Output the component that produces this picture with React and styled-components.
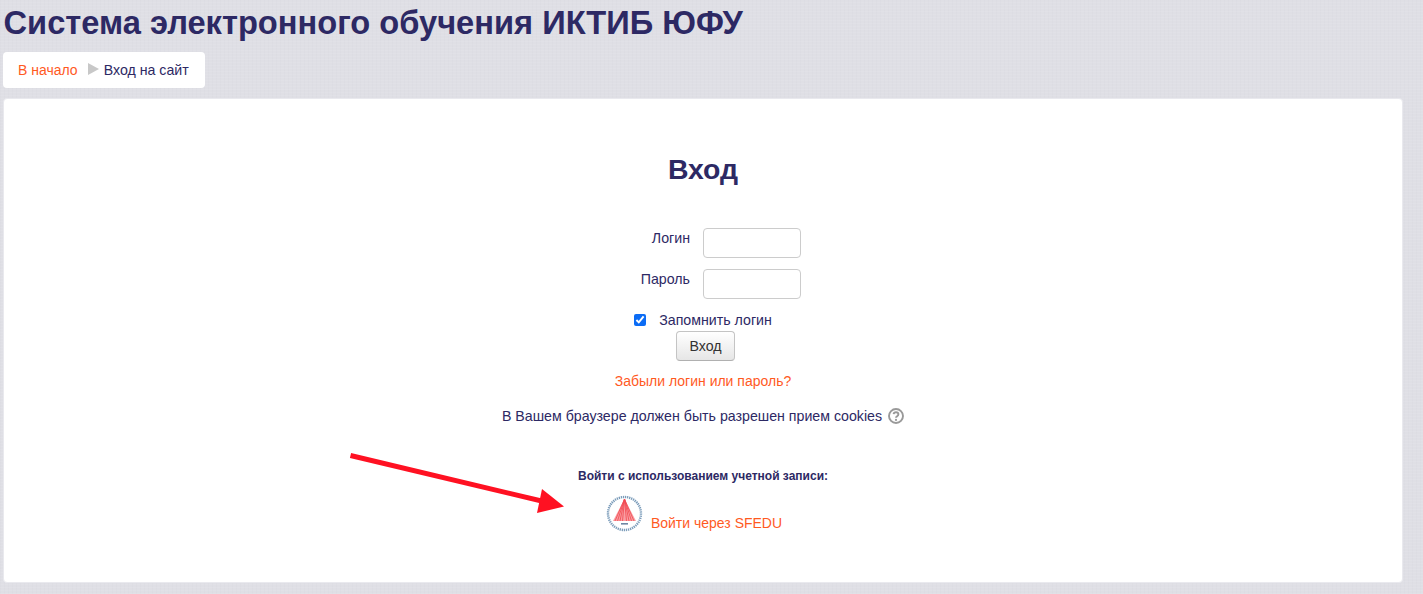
import styled, { createGlobalStyle } from "styled-components";

const GlobalStyle = createGlobalStyle`
  html, body {
    margin: 0;
    padding: 0;
    height: 100%;
  }
  body {
    overflow: hidden;
    background-color: #dfdfe5;
    background-image:
      repeating-linear-gradient(0deg, rgba(255, 255, 255, 0.07) 0 1px, transparent 1px 3px),
      repeating-linear-gradient(90deg, rgba(120, 120, 140, 0.025) 0 1px, transparent 1px 4px);
    font-family: "Liberation Sans", Arial, sans-serif;
    font-size: 14.2px;
    color: #2d2964;
  }
`;

const Page = styled.div`
  position: relative;
  width: 1423px;
  height: 594px;
  padding: 0 20px 0 3px;
  box-sizing: border-box;
`;

const SiteTitle = styled.h1`
  margin: 0;
  padding: 5px 0 0 0.5px;
  height: 52px;
  box-sizing: border-box;
  font-size: 32.65px;
  line-height: 36px;
  font-weight: bold;
  color: #2d2964;
  white-space: nowrap;
`;

const Breadcrumb = styled.nav`
  display: inline-flex;
  align-items: center;
  height: 36px;
  padding: 0 16px 0 15px;
  box-sizing: border-box;
  background: #fff;
  border-radius: 4px;
  vertical-align: top;
`;

const CrumbSeparator = styled.span`
  width: 0;
  height: 0;
  margin: 0 5px 2px 10px;
  border-style: solid;
  border-width: 6px 0 6px 11px;
  border-color: transparent transparent transparent #c8c8c8;
`;

const Link = styled.a`
  font-size: 14px;
  color: #ff5a1f;
  text-decoration: none;
`;

const MainBox = styled.main`
  display: flex;
  flex-direction: column;
  align-items: center;
  height: 485px;
  margin-top: 10px;
  box-sizing: border-box;
  background: #fff;
  border: 1px solid #e9e9ee;
  border-radius: 4px;
`;

const Heading = styled.h2`
  margin: 53px 0 0;
  font-size: 28.4px;
  line-height: 34px;
  font-weight: bold;
  color: #2d2964;
`;

const FormRow = styled.div`
  display: grid;
  grid-template-columns: 1fr 1fr;
  width: 100%;
  margin-top: ${(p) => p.$top}px;
`;

const FieldLabel = styled.label`
  justify-self: end;
  margin-right: 13px;
  line-height: 20px;
`;

const TextInput = styled.input`
  width: 98px;
  height: 30px;
  padding: 4px 6px;
  box-sizing: border-box;
  background: #fff;
  border: 1px solid #ccc;
  border-radius: 4px;
`;

const RememberRow = styled.div`
  display: flex;
  align-items: center;
  height: 20px;
  margin-top: 11px;
`;

const Checkbox = styled.input`
  width: 12px;
  height: 12px;
  margin: 0 13px 0 0;
  accent-color: #0b6cf5;
`;

const SubmitButton = styled.button`
  width: 59px;
  height: 30px;
  margin: 1px 0 0 5px;
  padding: 0;
  font-family: inherit;
  font-size: 14.2px;
  color: #333;
  background: linear-gradient(to bottom, #ffffff, #e6e6e6);
  border: 1px solid #c4c4c4;
  border-bottom-color: #b0b0b0;
  border-radius: 4px;
`;

const Forgot = styled.div`
  margin-top: 10px;
  line-height: 20px;
`;

const CookieNote = styled.div`
  display: flex;
  align-items: center;
  gap: 6px;
  margin-top: 15px;
  line-height: 20px;
`;

const ProviderTitle = styled.div`
  margin-top: 40px;
  font-size: 12px;
  line-height: 20px;
  font-weight: bold;
`;

const ProviderRow = styled.div`
  display: flex;
  align-items: flex-end;
  gap: 7px;
  margin: 9px 18px 0 0;
`;

const ProviderText = styled(Link)`
  line-height: 20px;
`;

const ArrowOverlay = styled.svg`
  position: absolute;
  left: 340px;
  top: 440px;
`;

const HelpIcon = () => (
  <svg width="16" height="16" viewBox="0 0 16 16" fill="none">
    <circle cx="8" cy="8" r="7" stroke="#999" strokeWidth="1.9" />
    <path
      d="M5.6 6.2C5.8 4.9 6.8 4.3 8 4.3c1.4 0 2.4.8 2.4 2 0 1.9-2.4 1.8-2.4 3.4"
      stroke="#999"
      strokeWidth="1.9"
    />
    <circle cx="8" cy="11.9" r="1.1" fill="#999" />
  </svg>
);

const rayEnds = [9, 11.5, 14, 16.5, 20.5, 23, 25.5, 28];

const SfeduLogo = () => (
  <svg width="38" height="38" viewBox="0 0 38 38" fill="none">
    <circle
      cx="18.5"
      cy="18.5"
      r="16.5"
      stroke="#7b9cba"
      strokeWidth="2.4"
      strokeDasharray="1.3 0.8"
    />
    <path d="M18.5 4L30 26H7Z" fill="#fa9ea2" />
    {rayEnds.map((x) => (
      <path key={x} d={`M18.5 4L${x} 26`} stroke="#f0474f" strokeWidth="0.8" />
    ))}
    <rect x="15" y="28" width="7" height="1.6" fill="#3d5f86" opacity="0.75" />
  </svg>
);

const App = () => {
  return (
    <Page>
      <GlobalStyle />
      <SiteTitle>Система электронного обучения ИКТИБ ЮФУ</SiteTitle>
      <Breadcrumb>
        <Link href="#">В начало</Link>
        <CrumbSeparator />
        <span>Вход на сайт</span>
      </Breadcrumb>
      <MainBox>
        <Heading>Вход</Heading>
        <FormRow $top={42}>
          <FieldLabel>Логин</FieldLabel>
          <TextInput type="text" />
        </FormRow>
        <FormRow $top={11}>
          <FieldLabel>Пароль</FieldLabel>
          <TextInput type="password" />
        </FormRow>
        <RememberRow>
          <Checkbox type="checkbox" defaultChecked />
          <span>Запомнить логин</span>
        </RememberRow>
        <SubmitButton type="button">Вход</SubmitButton>
        <Forgot>
          <Link href="#">Забыли логин или пароль?</Link>
        </Forgot>
        <CookieNote>
          В Вашем браузере должен быть разрешен прием cookies
          <HelpIcon />
        </CookieNote>
        <ProviderTitle>Войти с использованием учетной записи:</ProviderTitle>
        <ProviderRow>
          <SfeduLogo />
          <ProviderText href="#">Войти через SFEDU</ProviderText>
        </ProviderRow>
      </MainBox>
      <ArrowOverlay width="240" height="90" viewBox="0 0 240 90">
        <path d="M10.5 15.5L210 63" stroke="#ff1122" strokeWidth="5" />
        <path d="M202 49L197 73L224 66.5Z" fill="#ff1122" />
      </ArrowOverlay>
    </Page>
  );
};

export default App;
